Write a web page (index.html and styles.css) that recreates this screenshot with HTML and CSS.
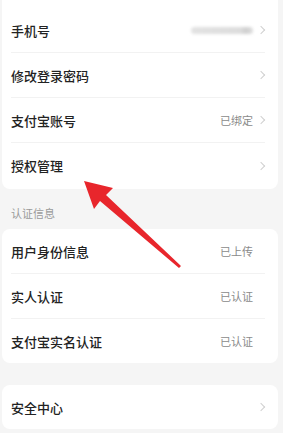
FILE: index.html
```html
<!doctype html>
<html lang="zh">
<head>
	<meta charset="UTF-8">
	<title>账号与安全</title>
	<link rel="stylesheet" href="styles.css">
</head>
<body>
	<div class="page">
		<section class="card card-top">
			<div class="row">
				<span class="label">手机号</span>
				<span class="value"><span class="masked"></span></span>
				<i class="chevron"></i>
			</div>
			<div class="row">
				<span class="label">修改登录密码</span>
				<span class="value"></span>
				<i class="chevron"></i>
			</div>
			<div class="row">
				<span class="label">支付宝账号</span>
				<span class="value">已绑定</span>
				<i class="chevron"></i>
			</div>
			<div class="row">
				<span class="label">授权管理</span>
				<span class="value"></span>
				<i class="chevron"></i>
			</div>
		</section>

		<h3 class="section-title">认证信息</h3>
		<section class="card">
			<div class="row">
				<span class="label">用户身份信息</span>
				<span class="value">已上传</span>
				<i class="chevron hidden"></i>
			</div>
			<div class="row">
				<span class="label">实人认证</span>
				<span class="value">已认证</span>
				<i class="chevron hidden"></i>
			</div>
			<div class="row">
				<span class="label">支付宝实名认证</span>
				<span class="value">已认证</span>
				<i class="chevron hidden"></i>
			</div>
		</section>

		<section class="card card-last">
			<div class="row">
				<span class="label">安全中心</span>
				<span class="value"></span>
				<i class="chevron"></i>
			</div>
		</section>
	</div>

	<!-- annotation arrow drawn over the screenshot -->
	<svg class="arrow" width="283" height="433" viewBox="0 0 283 433">
		<polygon fill="#e8262c" points="84,181 113,188 106,195 181,266 179,268 100,201 94,209"/>
	</svg>
</body>
</html>
```

FILE: styles.css
```css
body {
	margin: 0;
	background: #f5f5f5;
	font-family: "Noto Sans CJK SC", "Noto Sans", sans-serif;
	color: #222;
	width: 283px;
	height: 433px;
	overflow: hidden;
	position: relative;
}

.page {
	padding: 0 5px 0 2px;
}

.card {
	background: #fff;
	border-radius: 8px;
}

/* first card is cut off by the top of the screen */
.card-top {
	border-radius: 0 0 8px 8px;
	padding-top: 8px;
	padding-bottom: 1px;
}

.card-last {
	margin-top: 22px;
}

.row {
	display: flex;
	align-items: center;
	height: 45px;
	margin: 0 13px 0 9px;
	box-sizing: border-box;
	border-bottom: 1px solid #f2f2f2;
}
.row:last-child {
	border-bottom: none;
	height: 44px;
}
.card-top .row:last-child {
	height: 45px;
}

.label {
	flex: 1;
	font-size: 13px;
	font-weight: 500;
	line-height: 1;
}

.value {
	font-size: 11px;
	color: #8a8a8a;
	line-height: 1;
	display: flex;
	align-items: center;
}

.masked {
	display: block;
	width: 62px;
	height: 7px;
	border-radius: 4px;
	background: linear-gradient(90deg, #e2e2e2 0%, #dcdcdc 80%, #cfcfcf 88%, #dedede 100%);
	filter: blur(1.5px);
}

.chevron {
	width: 5px;
	height: 5px;
	margin-left: 5px;
	margin-right: 1px;
	border-top: 1px solid #d0d0d0;
	border-right: 1px solid #d0d0d0;
	transform: rotate(45deg);
}
.chevron.hidden {
	visibility: hidden;
}

.section-title {
	margin: 0;
	padding: 16px 0 8px 9px;
	font-size: 11px;
	font-weight: normal;
	line-height: 16px;
	color: #9a9a9a;
}

.arrow {
	position: absolute;
	top: 0;
	left: 0;
	pointer-events: none;
}
```
